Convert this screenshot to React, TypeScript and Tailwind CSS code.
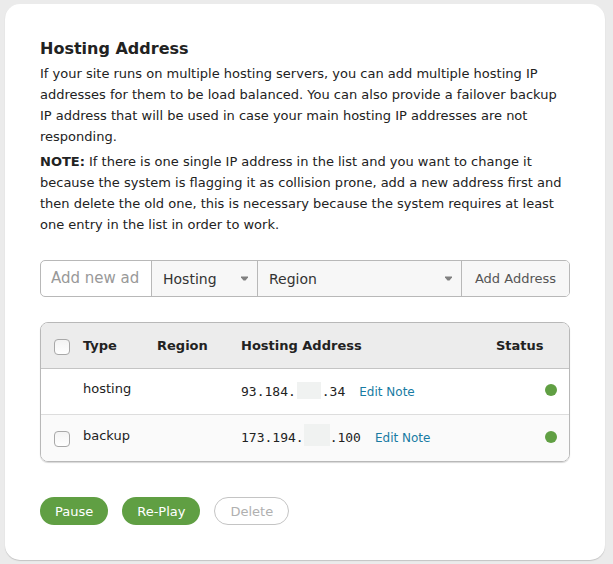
type Entry = {
  type: string;
  head: string;
  tail: string;
  mask: string;
  selectable: boolean;
};

const entries: Entry[] = [
  { type: "hosting", head: "93.184.", tail: ".34", mask: "mx-px w-6 h-[17px] mb-[-3px]", selectable: false },
  { type: "backup", head: "173.194.", tail: ".100", mask: "w-[26px] h-[22px] mb-[-4px] mt-[-4px]", selectable: true },
];

const checkbox =
  "block size-4 appearance-none rounded border border-[#a8a8a8] bg-gradient-to-b from-[#f3f3f3] to-white checked:bg-[#609f43]";

function Picker({ label, option, className }: { label: string; option: string; className: string }) {
  return (
    <div className={`relative border-r border-[#b8b8b8] bg-[#f7f7f7] ${className}`}>
      <select
        aria-label={label}
        className="h-full w-full appearance-none bg-transparent pl-[11px] pr-6 text-sm text-[#333]"
      >
        <option>{option}</option>
      </select>
      <svg
        className="pointer-events-none absolute right-[9px] top-[15px]"
        width="7"
        height="5"
        viewBox="0 0 7 5"
        aria-hidden="true"
      >
        <path d="M0 0.5H7V1.5L4.5 4.5H2.5L0 1.5Z" fill="#808080" />
      </svg>
    </div>
  );
}

export default function App() {
  return (
    <div className="min-h-screen bg-[#ebebeb] pb-1 pl-[5px] pr-2 pt-1 font-['DejaVu_Sans',sans-serif] text-[13px] leading-[21px] text-[#222]">
      <main className="rounded-[15px] bg-white px-[35px] pb-[35px] pt-[35px] shadow-[0_1px_1px_#c4c4c4]">
        <h1 className="text-base font-bold leading-5">Hosting Address</h1>
        <p className="mt-1">
          If your site runs on multiple hosting servers, you can add multiple hosting IP addresses for them to be load
          balanced. You can also provide a failover backup IP address that will be used in case your main hosting IP
          addresses are not responding.
        </p>
        <p className="mt-1">
          <strong>NOTE:</strong> If there is one single IP address in the list and you want to change it because the
          system is flagging it as collision prone, add a new address first and then delete the old one, this is
          necessary because the system requires at least one entry in the list in order to work.
        </p>

        <form
          className="mt-[25px] flex h-[37px] overflow-hidden rounded-[5px] border border-[#b8b8b8]"
          onSubmit={(e) => e.preventDefault()}
        >
          <input
            type="text"
            aria-label="New address"
            placeholder="Add new ad"
            className="w-[111px] shrink-0 border-r border-[#b8b8b8] px-[10px] text-[15px] placeholder:text-[#999]"
          />
          <Picker label="Type" option="Hosting" className="w-[106px] shrink-0" />
          <Picker label="Region" option="Region" className="min-w-0 flex-1" />
          <button type="submit" className="w-[107px] shrink-0 bg-[#f7f7f7] text-[#555]">
            Add Address
          </button>
        </form>

        <div className="mt-[25px] overflow-hidden rounded-lg border border-[#b8b8b8] shadow-[0_1px_1px_#d8d8d8]">
          <table className="w-full table-fixed border-separate border-spacing-0 text-left">
            <thead className="bg-[#ececec]">
              <tr className="h-[46px] *:border-b *:border-[#c4c4c4]">
                <th className="w-[42px] pl-[13px] pt-[3px]">
                  <input type="checkbox" aria-label="Select all" className={checkbox} />
                </th>
                <th className="w-[74px]">Type</th>
                <th className="w-[84px]">Region</th>
                <th>Hosting Address</th>
                <th className="w-[73px]">Status</th>
              </tr>
            </thead>
            <tbody>
              {entries.map((entry) => (
                <tr
                  key={entry.type}
                  className="h-[46px] *:border-b *:border-[#ddd] last:*:border-b-0 even:bg-[#fafafa]"
                >
                  <td className="pl-[13px] pt-[2px]">
                    {entry.selectable && (
                      <input type="checkbox" aria-label={`Select ${entry.type}`} className={checkbox} />
                    )}
                  </td>
                  <td className="pb-[6px]">{entry.type}</td>
                  <td></td>
                  <td className="whitespace-nowrap pb-px">
                    <span className="font-['DejaVu_Sans_Mono',monospace]">
                      {entry.head}
                      <span className={`inline-block bg-[#f0f2f1] ${entry.mask}`}></span>
                      {entry.tail}
                    </span>
                    <a href="#note" className="ml-[14px] text-xs text-[#187ba3]">
                      Edit Note
                    </a>
                  </td>
                  <td className="pb-[3px]">
                    <span
                      role="img"
                      aria-label="Online"
                      className="ml-auto mr-3 block size-3 rounded-full bg-[#609f43]"
                    ></span>
                  </td>
                </tr>
              ))}
            </tbody>
          </table>
        </div>

        <div className="mt-[35px] flex gap-[14px]">
          <button type="button" className="h-7 rounded-full bg-[#609f43] px-[15px] text-white">
            Pause
          </button>
          <button type="button" className="h-7 rounded-full bg-[#609f43] px-[15px] text-white">
            Re-Play
          </button>
          <button type="button" disabled className="h-7 rounded-full border border-[#c4c4c4] px-[15px] text-[#b0b0b0]">
            Delete
          </button>
        </div>
      </main>
    </div>
  );
}
